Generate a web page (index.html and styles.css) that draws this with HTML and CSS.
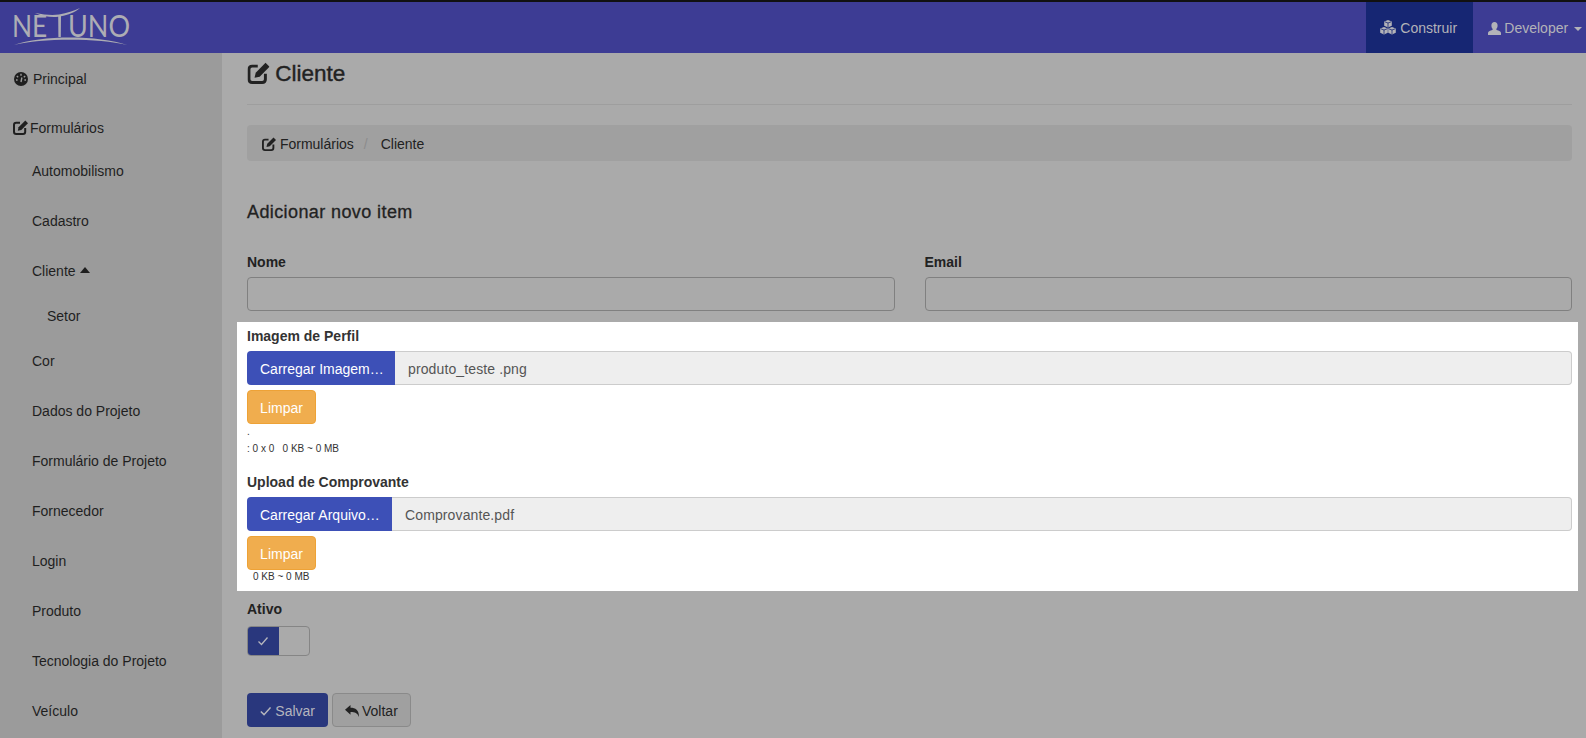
FILE: index.html
```html
<!DOCTYPE html>
<html lang="pt">
<head>
<meta charset="utf-8">
<title>Netuno</title>
<link rel="stylesheet" href="styles.css">
</head>
<body>
<header class="navbar">
  <a class="logo" href="#">
    <svg width="132" height="46" viewBox="0 0 132 46">
      <text class="logo-text" transform="translate(11 32) scale(0.85 1)">NE</text>
      <text class="logo-text" transform="translate(67 32) scale(0.87 1)">UNO</text>
      <path class="logo-line" d="M34 8 C44 10 52 10.500 58 9.500 C66 8 73 6 79 3 C74 7.500 67 10 60 11.300 L59.800 32 L57.400 32 L57.200 11.800 C49 12.500 41 11 34 8 Z"/>
      <path class="logo-line" d="M13 40 C40 30 98 30 126 40 C98 33 40 33 13 40 Z"/>
    </svg>
  </a>
  <nav class="nav-right">
    <a class="nav-item nav-active" href="#">
      <svg class="icon" width="16" height="15" viewBox="0 0 16 15"><g fill="currentColor"><path d="M8 0 11.800 1.400V5.800L8 7.400 4.200 5.800V1.400Z"/><path d="M4 7 7.800 8.400V12.800L4 14.400 0.200 12.800V8.400Z"/><path d="M12 7 15.800 8.400V12.800L12 14.400 8.200 12.800V8.400Z"/></g><path d="M4.800 1.800 8 3 11.200 1.800M8 3V7M0.800 8.800 4 10 7.200 8.800M4 10V14M8.800 8.800 12 10 15.200 8.800M12 10V14" fill="none" stroke="#162673" stroke-width="0.800"/></svg>
      Construir
    </a>
    <a class="nav-item" href="#">
      <svg class="icon icon-user" width="13" height="13" viewBox="0 0 13 13"><path fill="currentColor" d="M6.500 0C8.400 0 9.600 1.400 9.600 3.400 9.600 5 8.900 6.300 8.200 7 8.200 7.800 9 8.100 10.200 8.500 11.800 9.100 13 9.700 13 11V13H0V11C0 9.700 1.200 9.100 2.800 8.500 4 8.100 4.800 7.800 4.800 7 4.100 6.300 3.400 5 3.400 3.400 3.400 1.400 4.600 0 6.500 0Z"/></svg>
      Developer <span class="caret"></span>
    </a>
  </nav>
</header>
<div class="layout">
  <aside class="sidebar">
    <a class="side-top side-principal" href="#">
      <svg class="icon side-gauge" width="14" height="14" viewBox="0 0 14 14"><circle cx="7" cy="7" r="7" fill="currentColor"/><path d="M7 1.800V3.800M2.800 4 4.200 5.200M11.200 4 9.800 5.200M2 8H3.600M12 8H10.400M7 10 7.900 5.500" stroke="#9b9b9b" stroke-width="1.400" fill="none"/></svg>
      Principal
    </a>
    <a class="side-top side-forms" href="#">
      <svg class="icon icon-forms" width="15" height="15" viewBox="0 0 15 15"><use href="#edit"/></svg>Formulários
    </a>
    <a class="side-sub" href="#">Automobilismo</a>
    <a class="side-sub" href="#">Cadastro</a>
    <a class="side-sub side-open" href="#">Cliente <span class="caret-up"></span></a>
    <a class="side-sub2" href="#">Setor</a>
    <a class="side-sub side-after" href="#">Cor</a>
    <a class="side-sub" href="#">Dados do Projeto</a>
    <a class="side-sub" href="#">Formulário de Projeto</a>
    <a class="side-sub" href="#">Fornecedor</a>
    <a class="side-sub" href="#">Login</a>
    <a class="side-sub" href="#">Produto</a>
    <a class="side-sub" href="#">Tecnologia do Projeto</a>
    <a class="side-sub" href="#">Veículo</a>
  </aside>
  <main class="content">
    <h1 class="page-title">
      <svg class="icon" width="23" height="22" viewBox="0 0 15 15"><use href="#edit"/></svg>
      <span class="title-text">Cliente</span>
    </h1>
    <ol class="breadcrumb">
      <li><svg class="icon" width="14" height="14" viewBox="0 0 15 15"><use href="#edit"/></svg> Formulários</li>
      <li class="crumb-sep">/</li>
      <li>Cliente</li>
    </ol>
    <h2 class="section-title">Adicionar novo item</h2>
    <div class="row-two">
      <div class="field"><label>Nome</label><div class="input"></div></div>
      <div class="field"><label>Email</label><div class="input"></div></div>
    </div>
    <section class="highlight">
      <label>Imagem de Perfil</label>
      <div class="file-group">
        <span class="file-btn">Carregar Imagem…</span>
        <span class="file-name">produto_teste .png</span>
      </div>
      <span class="btn-clear">Limpar</span>
      <div class="tiny dot">.</div>
      <div class="tiny">: 0 x 0 &nbsp; 0 KB ~ 0 MB</div>
      <label class="label-second">Upload de Comprovante</label>
      <div class="file-group">
        <span class="file-btn file-btn-narrow">Carregar Arquivo…</span>
        <span class="file-name">Comprovante.pdf</span>
      </div>
      <span class="btn-clear">Limpar</span>
      <div class="tiny tiny-indent">0 KB ~ 0 MB</div>
    </section>
    <label class="label-active">Ativo</label>
    <div class="toggle">
      <span class="toggle-on"><svg width="12" height="10" viewBox="0 0 12 10"><path d="M1.500 5.500 4.500 8.500 10.500 1.500" stroke="currentColor" stroke-width="1.300" fill="none"/></svg></span>
    </div>
    <div class="actions">
      <span class="btn btn-save"><svg width="14" height="12" viewBox="0 0 14 12"><path d="M1 6.500 5 10.500 13 1.500" stroke="currentColor" stroke-width="1.800" fill="none"/></svg><span class="btn-label">Salvar</span></span>
      <span class="btn btn-back"><svg width="14" height="12" viewBox="0 0 14 12"><path fill="currentColor" d="M0 4.800 5.500 0V2.800C10.500 2.800 14 4.800 14 12 12.500 8 10 7 5.500 7V9.800Z"/></svg><span class="btn-label btn-label-back">Voltar</span></span>
    </div>
  </main>
</div>
<svg class="defs" width="0" height="0">
  <symbol id="edit" viewBox="0 0 15 15">
    <path fill="none" stroke="currentColor" stroke-width="2" d="M7 2.800H3.200C1.900 2.800 1 3.700 1 5V11.800C1 13.100 1.900 14 3.200 14H10C11.300 14 12.200 13.100 12.200 11.800V8"/>
    <path fill="currentColor" d="M12.300 0.500 15 3.200 8.300 10 4.800 10.800 5.600 7.300Z"/>
  </symbol>
</svg>
</body>
</html>
```
FILE: styles.css
```css
* { box-sizing: border-box; }
html, body { margin: 0; height: 738px; overflow: hidden; }
body {
  font-family: "Liberation Sans", Arial, sans-serif;
  font-size: 14px;
  line-height: 20px;
  color: #1f1f1f;
  background: #aaaaaa;
  display: flex;
  flex-direction: column;
}
a { color: inherit; text-decoration: none; }
.defs { position: absolute; }
.icon { vertical-align: -2px; }

.navbar {
  height: 53px;
  flex: none;
  border-top: 2px solid #111;
  background: #3d3c94;
  display: flex;
  justify-content: space-between;
  color: #b3b3b8;
}
.logo { display: block; padding: 3px 0 0 1px; }
.logo-text { font-family: "Lato", "Liberation Sans", sans-serif; font-weight: 400; font-size: 31px; fill: #adadb4; }
.logo-line { fill: #adadb4; }
.nav-right { display: flex; }
.nav-item { display: block; padding: 16px 4px 0 15px; white-space: nowrap; }
.nav-active { background: #162673; width: 107px; padding-left: 14px; }
.icon-user { margin-right: -1px; }
.caret {
  display: inline-block;
  border-top: 4px solid currentColor;
  border-left: 4px solid transparent;
  border-right: 4px solid transparent;
  vertical-align: middle;
  margin-left: 2px;
}

.layout { flex: 1; display: flex; min-height: 0; }
.sidebar {
  width: 222px;
  flex: none;
  background: #9b9b9b;
  display: flex;
  flex-direction: column;
  padding-top: 16px;
  overflow: hidden;
}
.side-top { display: block; height: 20px; padding-left: 14px; margin-bottom: 29px; }
.side-gauge { margin-right: 1px; }
.side-forms { padding-left: 13px; margin-bottom: 23px; }
.icon-forms { margin-right: 2px; }
.side-sub { display: block; height: 20px; padding-left: 32px; margin-bottom: 30px; flex: none; }
.side-open { margin-bottom: 25px; }
.side-sub2 { display: block; height: 20px; padding-left: 47px; margin-bottom: 25px; flex: none; }
.caret-up {
  display: inline-block;
  border-bottom: 6px solid currentColor;
  border-left: 5px solid transparent;
  border-right: 5px solid transparent;
  vertical-align: 3px;
  margin-left: 1px;
}

.content { flex: 1; min-width: 0; padding: 0 14px 0 25px; color: #222; }
.page-title {
  font-size: 22.500px;
  line-height: 26px;
  font-weight: 400;
  margin: 8px 0 0;
  height: 44px;
  border-bottom: 1px solid #9e9e9e;
}
.title-text { -webkit-text-stroke: 0.4px currentColor; margin-left: -1px; }
.page-title .icon { vertical-align: -3px; margin-right: 0; }
.breadcrumb {
  list-style: none;
  margin: 20px 0 0;
  height: 36px;
  padding: 9px 15px 7px;
  background: #a0a0a0;
  border-radius: 4px;
  display: flex;
  gap: 10px;
  color: #222;
}
.crumb-sep { color: #8c8c8c; margin-right: 3px; }
.section-title {
  font-size: 18px;
  line-height: 20px;
  font-weight: 400;
  letter-spacing: 0.4px;
  -webkit-text-stroke: 0.3px currentColor;
  margin: 41px 0 0;
  height: 20px;
}
.row-two { display: flex; gap: 30px; margin-top: 30px; }
.field { flex: 1; }
label { display: block; font-weight: 700; height: 20px; }
.input {
  height: 34px;
  margin-top: 5px;
  border: 1px solid #808080;
  border-radius: 4px;
  background: #aaaaaa;
}

.highlight {
  background: #fff;
  margin: 11px -6px 0 -10px;
  padding: 4px 6px 4px 10px;
  height: 269px;
  color: #333;
  position: relative;
}
.file-group { display: flex; height: 34px; margin-top: 5px; }
.file-btn {
  flex: none;
  width: 148px;
  background: #3d50b7;
  color: #fff;
  padding: 8px 0 0 13px;
  border-radius: 4px 0 0 4px;
}
.file-btn-narrow { width: 145px; }
.file-name {
  flex: 1;
  background: #eeeeee;
  border: 1px solid #cccccc;
  border-left: 0;
  border-radius: 0 4px 4px 0;
  padding: 7px 13px 5px;
  color: #555;
  letter-spacing: 0.12px;
}
.btn-clear {
  display: block;
  width: 69px;
  height: 34px;
  margin-top: 5px;
  background: #f0ad4e;
  border: 1px solid #eea236;
  border-radius: 4px;
  color: #fff;
  text-align: center;
  line-height: 34px;
}
.tiny { font-size: 10px; line-height: 14px; height: 14px; color: #333; }
.dot { margin-top: 1px; height: 17px; }
.tiny-indent { padding-left: 6px; line-height: 13px; }
.label-second { margin-top: 16px; }

.label-active { margin-top: 8px; }
.toggle {
  width: 63px;
  height: 30px;
  margin-top: 7px;
  border: 1px solid #858585;
  border-radius: 4px;
  background: #aaaaaa;
  overflow: hidden;
}
.toggle-on {
  display: flex;
  align-items: center;
  justify-content: center;
  width: 31px;
  height: 100%;
  background: #29377d;
  color: #b5b5bd;
  padding-right: 2px;
}
.actions { display: flex; gap: 4px; margin-top: 37px; }
.btn {
  display: flex;
  align-items: center;
  height: 34px;
  border-radius: 4px;
  padding: 2px 12px 0;
  white-space: nowrap;
  border: 1px solid transparent;
}
.btn-label { margin-left: 4px; }
.btn-label-back { margin-left: 3px; }
.btn-save { width: 81px; background: #29377d; color: #b5b5bd; }
.btn-back { width: 79px; background: #a0a0a0; border-color: #8a8a8a; color: #222; }
```
